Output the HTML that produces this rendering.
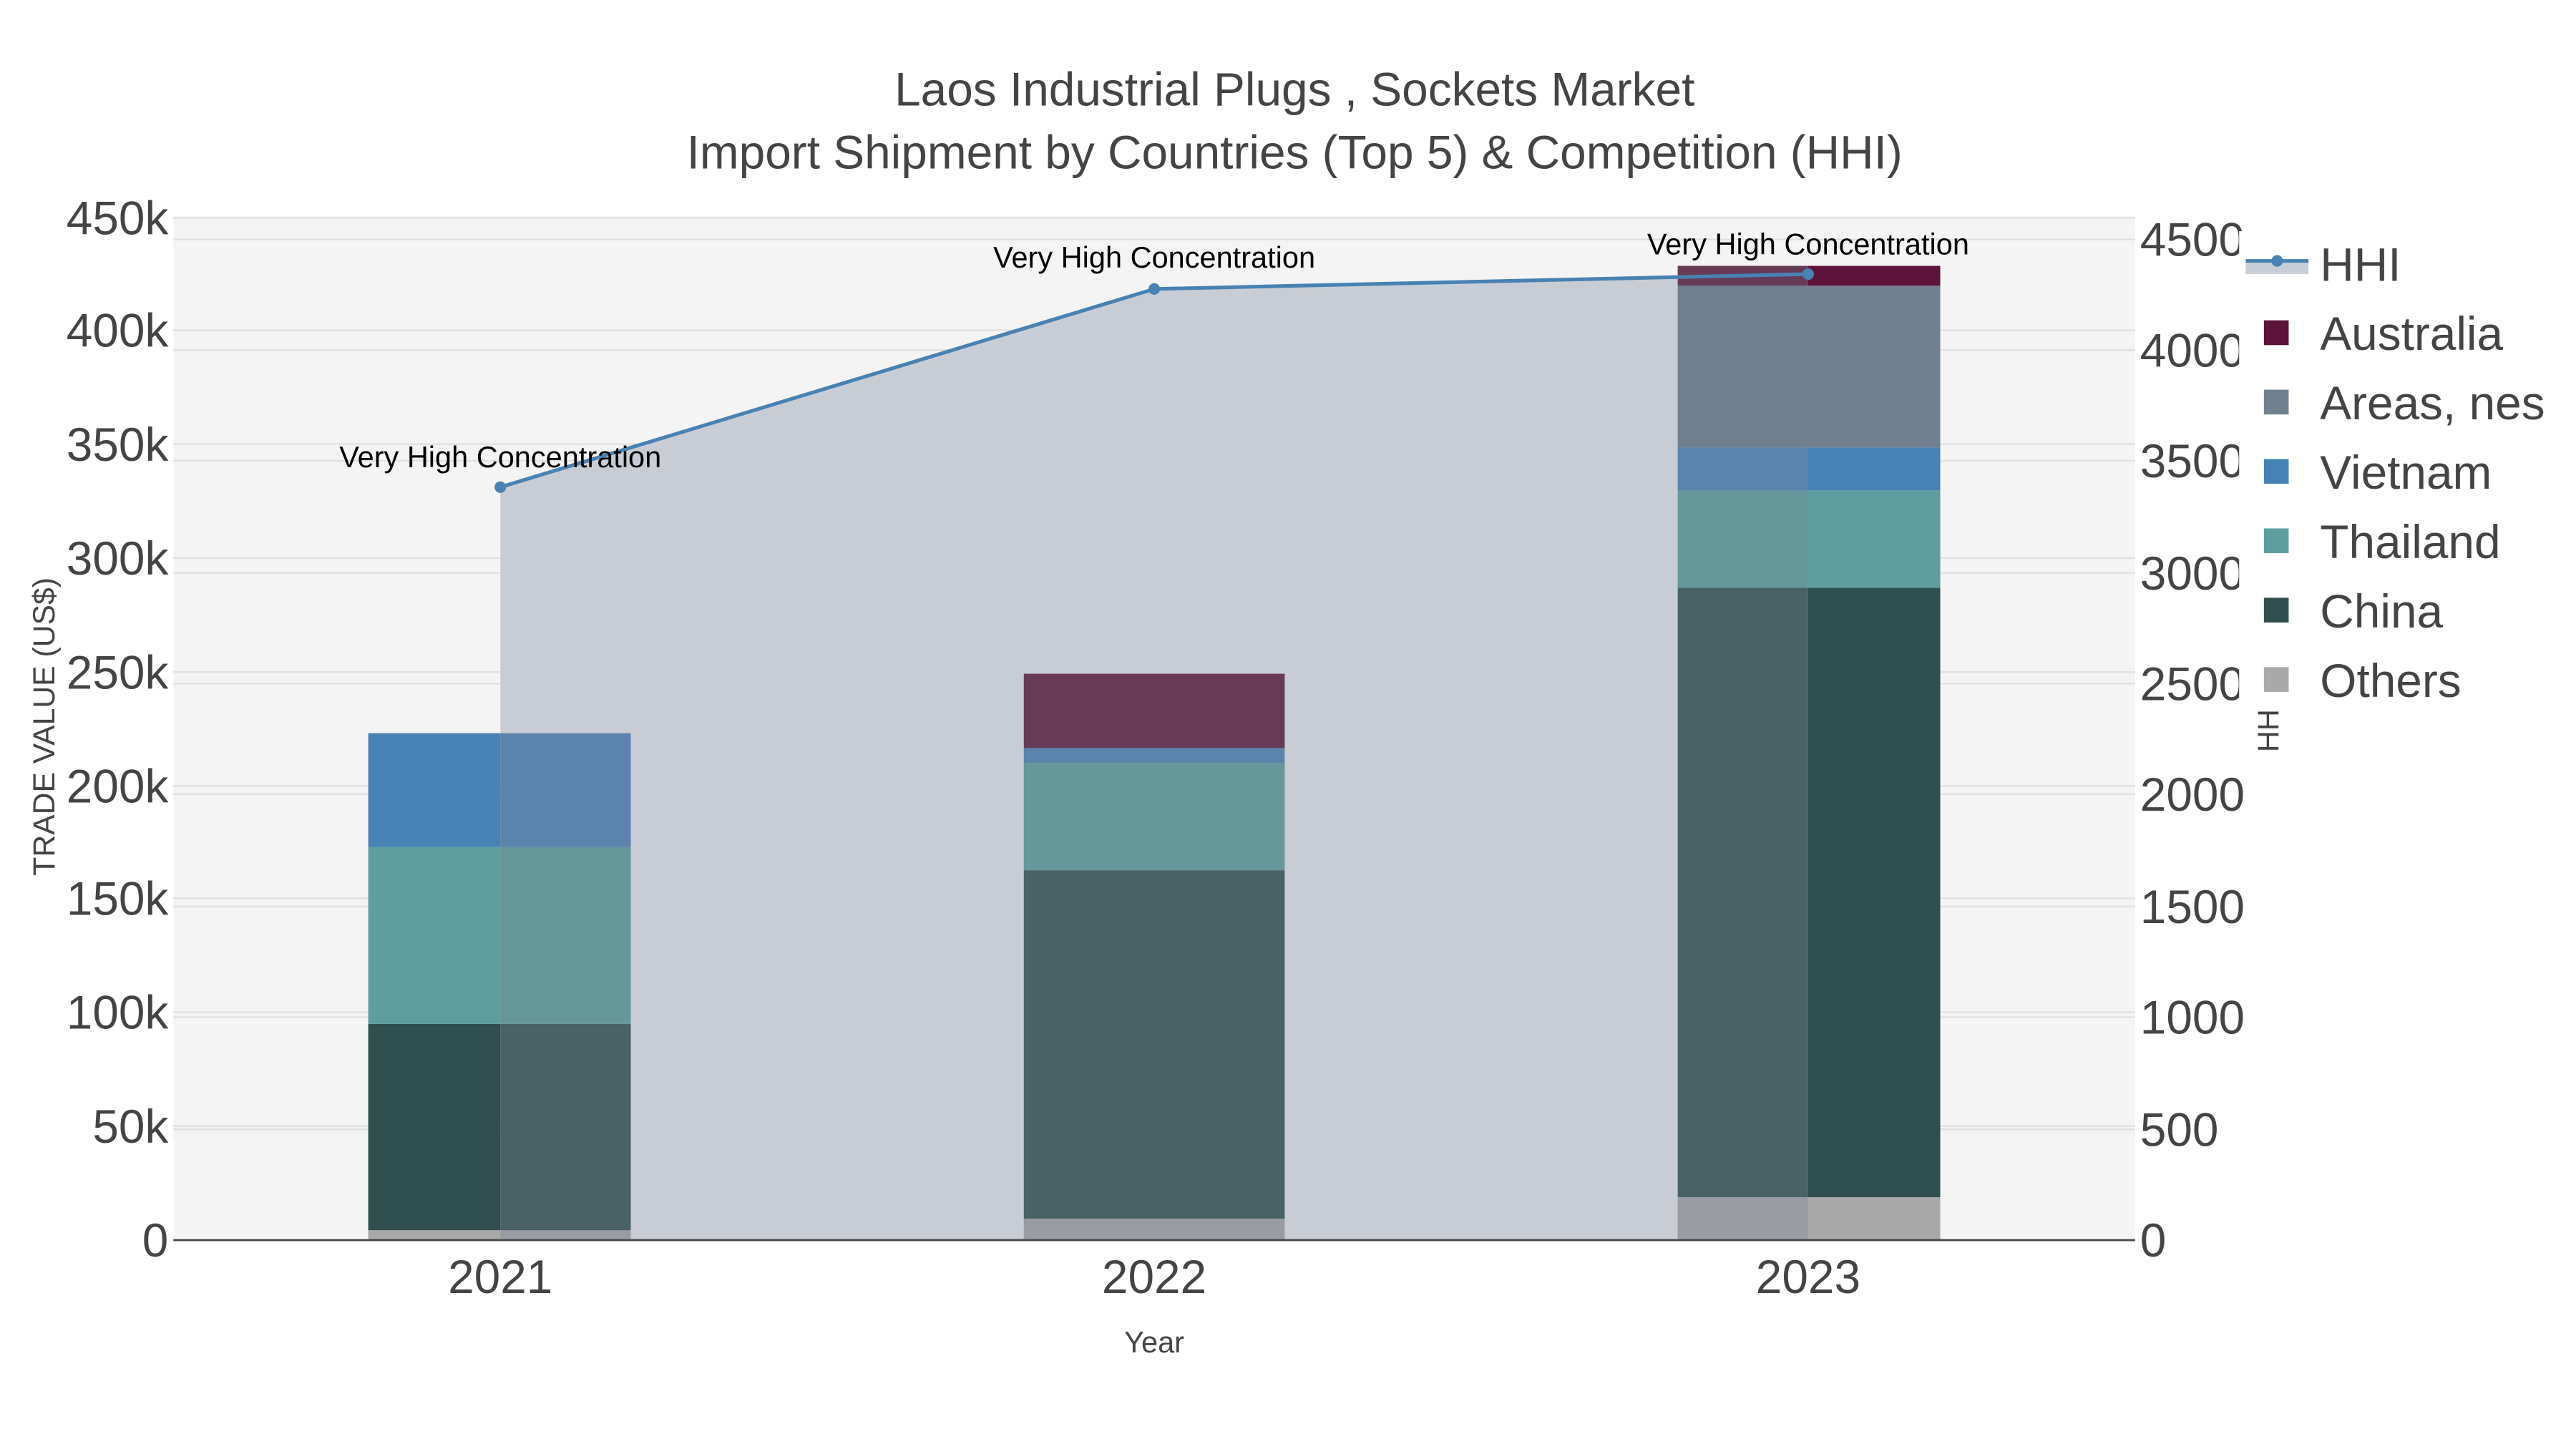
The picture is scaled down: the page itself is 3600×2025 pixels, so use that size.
<!DOCTYPE html>
<html><head><meta charset="utf-8"><style>html,body{margin:0;padding:0;background:#fff}svg{display:block}text{font-family:"Liberation Sans",sans-serif}</style></head><body>
<svg width="3600" height="2025" viewBox="0 0 1560 877.5" xmlns="http://www.w3.org/2000/svg">
<rect x="0" y="0" width="1560" height="877.5" fill="#fff"/>
<rect x="105" y="131" width="1188" height="620" fill="#f4f4f4"/>
<g stroke="#e0e0e0" stroke-width="1">
<line x1="105" x2="1293" y1="682" y2="682"/><line x1="105" x2="1293" y1="613" y2="613"/><line x1="105" x2="1293" y1="544" y2="544"/><line x1="105" x2="1293" y1="476" y2="476"/><line x1="105" x2="1293" y1="407" y2="407"/><line x1="105" x2="1293" y1="338" y2="338"/><line x1="105" x2="1293" y1="269" y2="269"/><line x1="105" x2="1293" y1="200" y2="200"/><line x1="105" x2="1293" y1="132" y2="132"/>
<line x1="105" x2="1293" y1="684" y2="684"/><line x1="105" x2="1293" y1="616" y2="616"/><line x1="105" x2="1293" y1="549" y2="549"/><line x1="105" x2="1293" y1="481" y2="481"/><line x1="105" x2="1293" y1="414" y2="414"/><line x1="105" x2="1293" y1="347" y2="347"/><line x1="105" x2="1293" y1="279" y2="279"/><line x1="105" x2="1293" y1="212" y2="212"/><line x1="105" x2="1293" y1="145" y2="145"/>
</g>
<polygon points="303,295 699,175 1095,166 1095,751 303,751" fill="#c8cdd5"/>
<rect x="223" y="745" width="80" height="6" fill="#a9a9a9"/>
<rect x="223" y="620" width="80" height="125" fill="#2f4f4f"/>
<rect x="223" y="513" width="80" height="107" fill="#5f9ea0"/>
<rect x="223" y="444" width="80" height="69" fill="#4682b4"/>
<rect x="303" y="745" width="79" height="6" fill="#999ca3"/>
<rect x="303" y="620" width="79" height="125" fill="#486266"/>
<rect x="303" y="513" width="79" height="107" fill="#66979a"/>
<rect x="303" y="444" width="79" height="69" fill="#5b84ad"/>
<rect x="620" y="738" width="158" height="13" fill="#999ca3"/>
<rect x="620" y="527" width="158" height="211" fill="#486266"/>
<rect x="620" y="462" width="158" height="65" fill="#66979a"/>
<rect x="620" y="453" width="158" height="9" fill="#5b84ad"/>
<rect x="620" y="408" width="158" height="45" fill="#673a55"/>
<rect x="1016" y="725" width="79" height="26" fill="#999ca3"/>
<rect x="1016" y="356" width="79" height="369" fill="#486266"/>
<rect x="1016" y="297" width="79" height="59" fill="#66979a"/>
<rect x="1016" y="271" width="79" height="26" fill="#5b84ad"/>
<rect x="1016" y="173" width="79" height="98" fill="#707f8f"/>
<rect x="1016" y="161" width="79" height="12" fill="#673a55"/>
<rect x="1095" y="725" width="80" height="26" fill="#a9a9a9"/>
<rect x="1095" y="356" width="80" height="369" fill="#2f4f4f"/>
<rect x="1095" y="297" width="80" height="59" fill="#5f9ea0"/>
<rect x="1095" y="271" width="80" height="26" fill="#4682b4"/>
<rect x="1095" y="173" width="80" height="98" fill="#708090"/>
<rect x="1095" y="161" width="80" height="12" fill="#5c1239"/>
<line x1="105" x2="1293" y1="751" y2="751" stroke="#444" stroke-width="1.2"/>
<polyline points="303,295 699,175 1095,166" fill="none" stroke="#4682b4" stroke-width="2.2"/>
<circle cx="303" cy="295" r="3.5" fill="#4682b4"/><circle cx="699" cy="175" r="3.5" fill="#4682b4"/><circle cx="1095" cy="166" r="3.5" fill="#4682b4"/>
<g font-size="18" fill="#000" text-anchor="middle">
<text x="303" y="283">Very High Concentration</text><text x="699" y="162">Very High Concentration</text><text x="1095" y="154">Very High Concentration</text>
</g>
<g font-size="28.5" fill="#444" text-anchor="middle">
<text x="784" y="64">Laos Industrial Plugs , Sockets Market</text>
<text x="784" y="102">Import Shipment by Countries (Top 5) &amp; Competition (HHI)</text>
</g>
<g font-size="28.5" fill="#444" text-anchor="end">
<text x="102" y="761">0</text><text x="102" y="692">50k</text><text x="102" y="623">100k</text><text x="102" y="554">150k</text><text x="102" y="486">200k</text><text x="102" y="417">250k</text><text x="102" y="348">300k</text><text x="102" y="279">350k</text><text x="102" y="210">400k</text><text x="102" y="142">450k</text>
</g>
<g font-size="28.5" fill="#444">
<text x="1296" y="761">0</text><text x="1296" y="694">500</text><text x="1296" y="626">1000</text><text x="1296" y="559">1500</text><text x="1296" y="491">2000</text><text x="1296" y="424">2500</text><text x="1296" y="357">3000</text><text x="1296" y="289">3500</text><text x="1296" y="222">4000</text><text x="1296" y="155">4500</text>
</g>
<g font-size="28.5" fill="#444" text-anchor="middle">
<text x="303" y="783">2021</text><text x="699" y="783">2022</text><text x="1095" y="783">2023</text>
</g>
<text x="699" y="819" font-size="18" fill="#444" text-anchor="middle">Year</text>
<text transform="translate(33,440) rotate(-90)" font-size="18.5" fill="#444" text-anchor="middle">TRADE VALUE (US$)</text>
<text transform="translate(1380,440) rotate(-90)" font-size="18" fill="#444" text-anchor="middle">HHI</text>
<rect x="1356" y="140" width="204" height="290" fill="#fff"/>
<rect x="1360" y="158" width="38" height="8" fill="#c8cdd5"/>
<line x1="1360" x2="1398" y1="158" y2="158" stroke="#4682b4" stroke-width="2.2"/>
<circle cx="1379" cy="158" r="3.5" fill="#4682b4"/>
<rect x="1371" y="194" width="15" height="15" fill="#5c1239"/>
<rect x="1371" y="236" width="15" height="15" fill="#708090"/>
<rect x="1371" y="278" width="15" height="15" fill="#4682b4"/>
<rect x="1371" y="320" width="15" height="15" fill="#5f9ea0"/>
<rect x="1371" y="362" width="15" height="15" fill="#2f4f4f"/>
<rect x="1371" y="404" width="15" height="15" fill="#a9a9a9"/>
<g font-size="28.5" fill="#444">
<text x="1405" y="170">HHI</text><text x="1405" y="212">Australia</text><text x="1405" y="254">Areas, nes</text><text x="1405" y="296">Vietnam</text><text x="1405" y="338">Thailand</text><text x="1405" y="380">China</text><text x="1405" y="422">Others</text>
</g>
</svg>
</body></html>
